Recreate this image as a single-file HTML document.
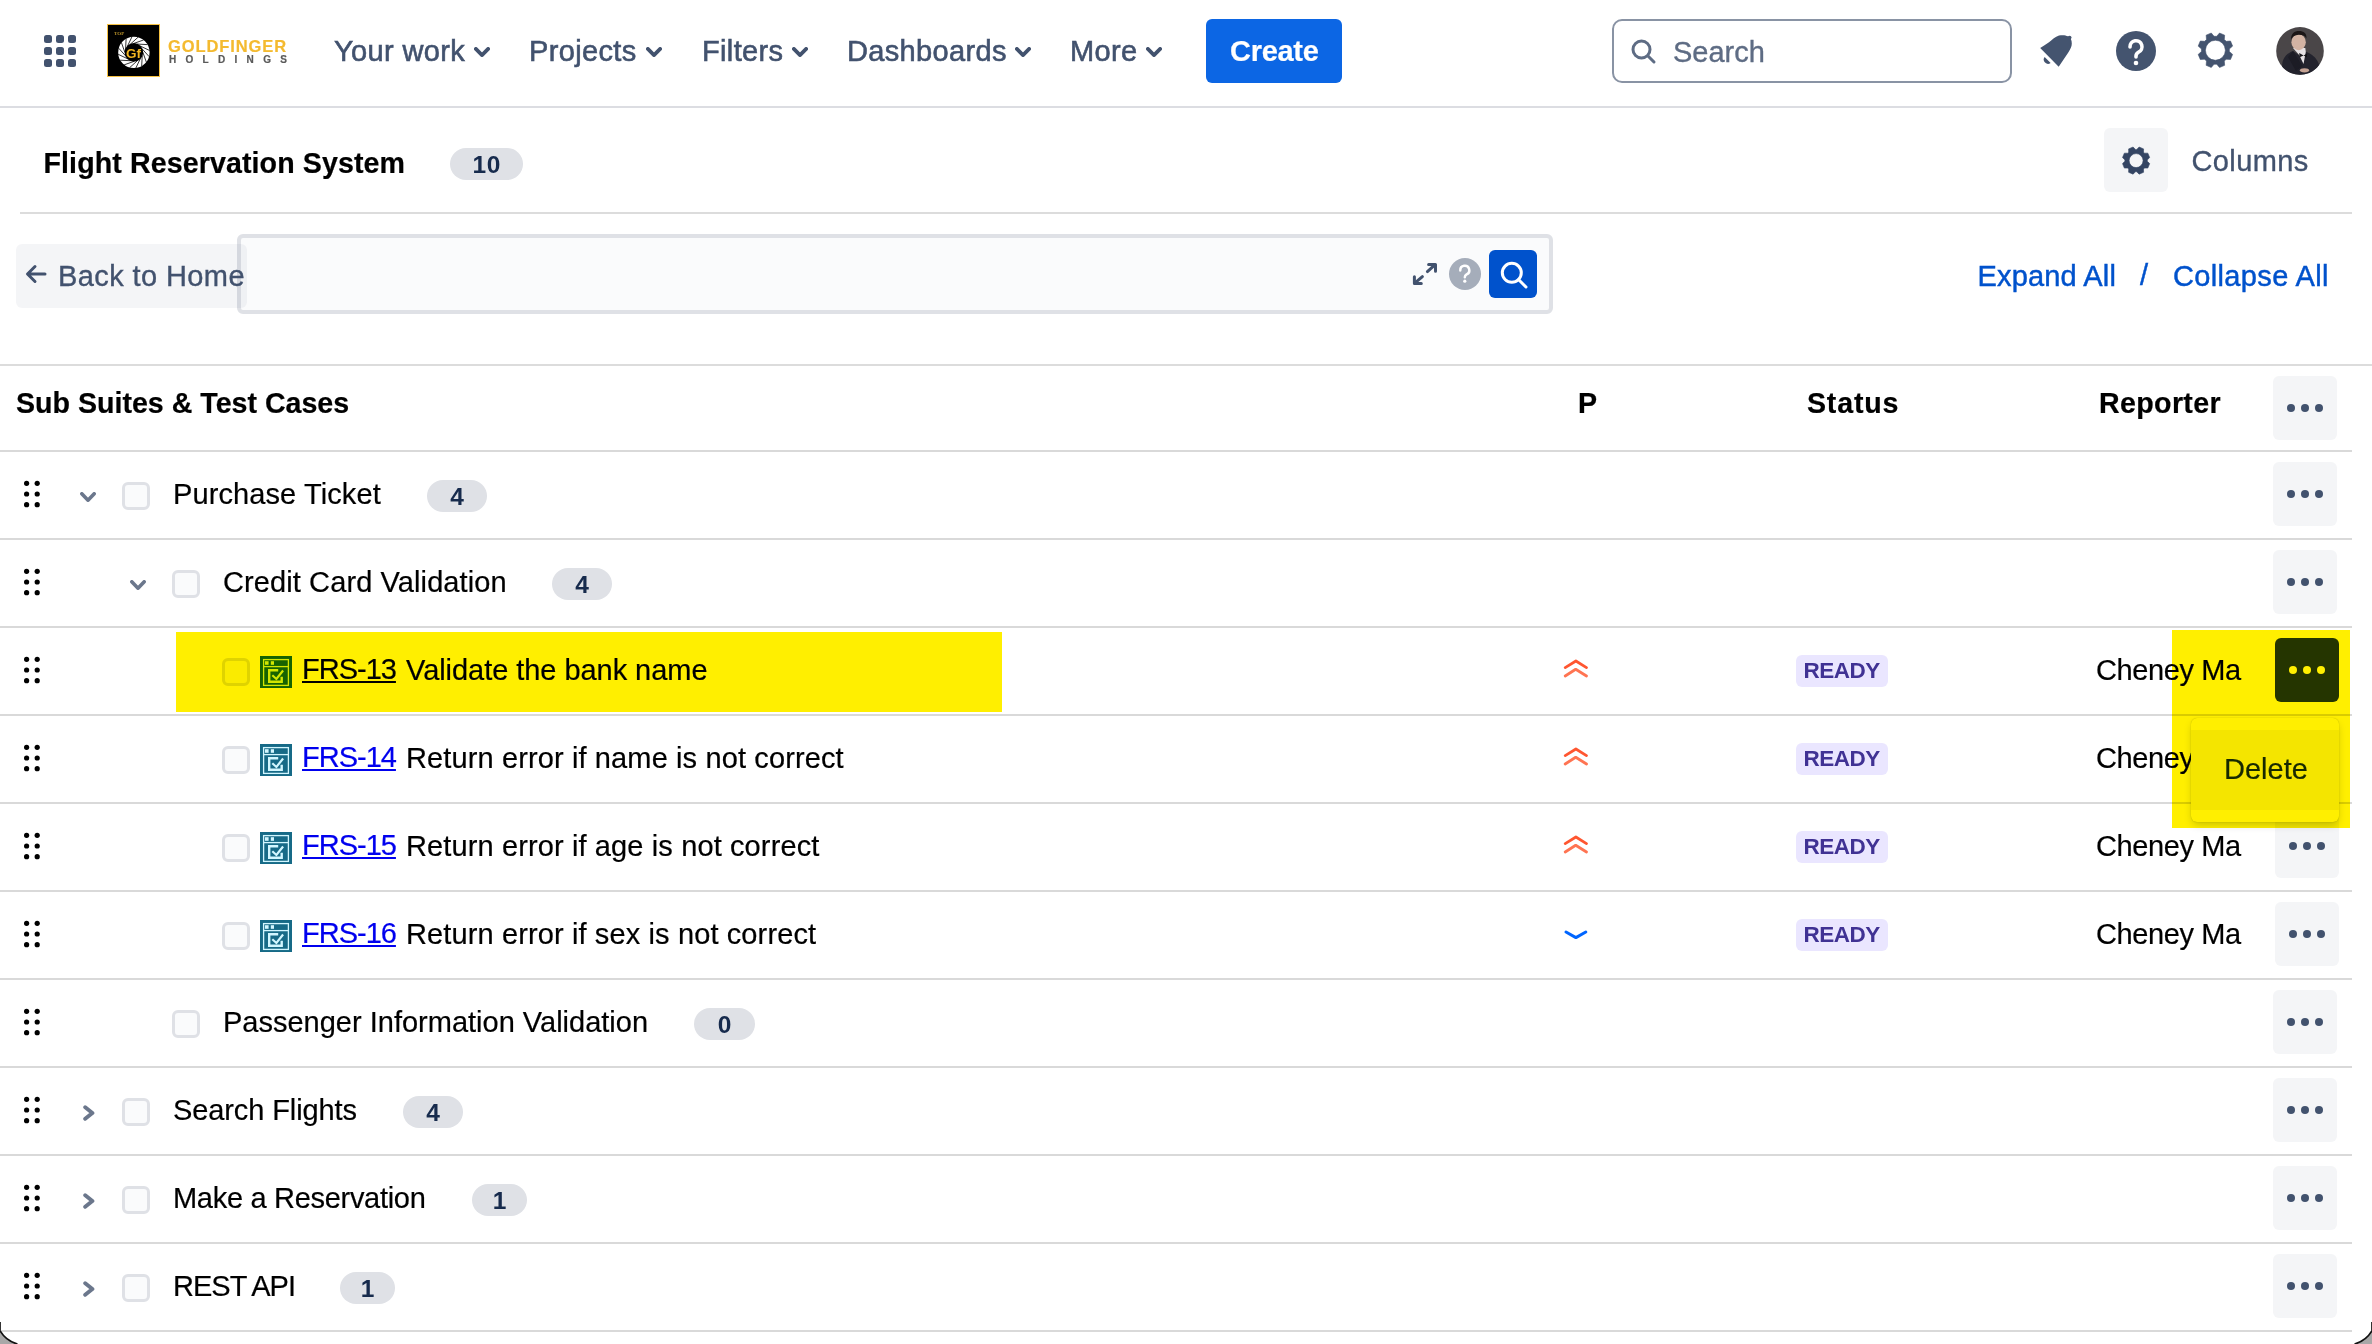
<!DOCTYPE html><html><head><meta charset="utf-8"><style>
*{box-sizing:border-box;margin:0;padding:0}
html,body{width:2372px;height:1344px;overflow:hidden;background:#fff;font-family:'Liberation Sans', sans-serif}
.t{position:absolute;line-height:40px;white-space:nowrap;-webkit-text-stroke:0.2px currentColor}
.a{position:absolute}
.hl{position:absolute;background:#FFEF00;mix-blend-mode:multiply}
.line{position:absolute;height:2px;background:#D9D9D9}
.cb{position:absolute;width:28px;height:28px;border:3.5px solid #DFE1E6;border-radius:6px;background:#FAFBFC}
.badge{position:absolute;height:32px;border-radius:16px;background:#DFE1E6;color:#172B4D;font-weight:bold;font-size:24.5px;line-height:33px;text-align:center}
.more{position:absolute;width:64px;height:64px;border-radius:6px;background:#F4F5F7}
.more i{position:absolute;top:28px;width:8px;height:8px;border-radius:50%;background:#42526E}
.drag i{position:absolute;width:6px;height:6px;border-radius:50%;background:#000}
.lozenge{position:absolute;height:32px;width:92px;border-radius:6px;background:#EAE6FF;color:#403294;font-weight:bold;font-size:22.5px;letter-spacing:-0.5px;text-indent:-0.5px;line-height:32px;text-align:center}
</style></head><body>
<div class="a" style="left:44px;top:35px;width:8px;height:8px;border-radius:2.5px;background:#42526E"></div>
<div class="a" style="left:56px;top:35px;width:8px;height:8px;border-radius:2.5px;background:#42526E"></div>
<div class="a" style="left:68px;top:35px;width:8px;height:8px;border-radius:2.5px;background:#42526E"></div>
<div class="a" style="left:44px;top:47px;width:8px;height:8px;border-radius:2.5px;background:#42526E"></div>
<div class="a" style="left:56px;top:47px;width:8px;height:8px;border-radius:2.5px;background:#42526E"></div>
<div class="a" style="left:68px;top:47px;width:8px;height:8px;border-radius:2.5px;background:#42526E"></div>
<div class="a" style="left:44px;top:59px;width:8px;height:8px;border-radius:2.5px;background:#42526E"></div>
<div class="a" style="left:56px;top:59px;width:8px;height:8px;border-radius:2.5px;background:#42526E"></div>
<div class="a" style="left:68px;top:59px;width:8px;height:8px;border-radius:2.5px;background:#42526E"></div>
<div class="a" style="left:107px;top:24px;width:53px;height:53px;background:#000;border:1.5px solid #F6C244"></div>
<svg class="a" style="left:107px;top:24px" width="53" height="53" viewBox="0 0 53 53">
<circle cx="26.9" cy="28.4" r="12.5" fill="none" stroke="#fff" stroke-width="6.4"/>
<g stroke="#000" stroke-width="0.8"><line x1="35.90" y1="28.40" x2="39.35" y2="38.13"/><line x1="35.21" y1="31.84" x2="34.68" y2="42.15"/><line x1="33.26" y1="34.76" x2="28.83" y2="44.08"/><line x1="30.34" y1="36.71" x2="22.68" y2="43.63"/><line x1="26.90" y1="37.40" x2="17.17" y2="40.85"/><line x1="23.46" y1="36.71" x2="13.15" y2="36.18"/><line x1="20.54" y1="34.76" x2="11.22" y2="30.33"/><line x1="18.59" y1="31.84" x2="11.67" y2="24.18"/><line x1="17.90" y1="28.40" x2="14.45" y2="18.67"/><line x1="18.59" y1="24.96" x2="19.12" y2="14.65"/><line x1="20.54" y1="22.04" x2="24.97" y2="12.72"/><line x1="23.46" y1="20.09" x2="31.12" y2="13.17"/><line x1="26.90" y1="19.40" x2="36.63" y2="15.95"/><line x1="30.34" y1="20.09" x2="40.65" y2="20.62"/><line x1="33.26" y1="22.04" x2="42.58" y2="26.47"/><line x1="35.21" y1="24.96" x2="42.13" y2="32.62"/></g>
<text x="26.6" y="33.6" font-family="Liberation Sans" font-weight="bold" font-size="13.5" fill="#F2B520" text-anchor="middle">Gf</text>
<text x="7" y="11" font-family="Liberation Serif" font-weight="bold" font-size="5" fill="#B8912A">TOP</text>
</svg>
<div class="t " style="left:168px;top:25.78px;font-size:16.5px;color:#F4BA2F;font-weight:bold;letter-spacing:0.9px;">GOLDFINGER</div>
<div class="t " style="left:169px;top:40.03px;font-size:10px;color:#5A5A5A;font-weight:bold;letter-spacing:9.3px;">HOLDINGS</div>
<div class="t " style="left:334px;top:30.95px;font-size:29px;color:#42526E;font-weight:normal;letter-spacing:0.35px;-webkit-text-stroke:0.6px #42526E">Your work</div>
<svg class="a" style="left:474px;top:47px" width="16" height="10" viewBox="0 0 16 10"><path d="M1.85 1.85 L8.0 8.15 L14.15 1.85" fill="none" stroke="#42526E" stroke-width="3.7" stroke-linecap="round" stroke-linejoin="round"/></svg>
<div class="t " style="left:529px;top:30.95px;font-size:29px;color:#42526E;font-weight:normal;letter-spacing:0.35px;-webkit-text-stroke:0.6px #42526E">Projects</div>
<svg class="a" style="left:646px;top:47px" width="16" height="10" viewBox="0 0 16 10"><path d="M1.85 1.85 L8.0 8.15 L14.15 1.85" fill="none" stroke="#42526E" stroke-width="3.7" stroke-linecap="round" stroke-linejoin="round"/></svg>
<div class="t " style="left:702px;top:30.95px;font-size:29px;color:#42526E;font-weight:normal;letter-spacing:0.35px;-webkit-text-stroke:0.6px #42526E">Filters</div>
<svg class="a" style="left:792px;top:47px" width="16" height="10" viewBox="0 0 16 10"><path d="M1.85 1.85 L8.0 8.15 L14.15 1.85" fill="none" stroke="#42526E" stroke-width="3.7" stroke-linecap="round" stroke-linejoin="round"/></svg>
<div class="t " style="left:847px;top:30.95px;font-size:29px;color:#42526E;font-weight:normal;letter-spacing:0.35px;-webkit-text-stroke:0.6px #42526E">Dashboards</div>
<svg class="a" style="left:1015px;top:47px" width="16" height="10" viewBox="0 0 16 10"><path d="M1.85 1.85 L8.0 8.15 L14.15 1.85" fill="none" stroke="#42526E" stroke-width="3.7" stroke-linecap="round" stroke-linejoin="round"/></svg>
<div class="t " style="left:1070px;top:30.95px;font-size:29px;color:#42526E;font-weight:normal;letter-spacing:0.35px;-webkit-text-stroke:0.6px #42526E">More</div>
<svg class="a" style="left:1146px;top:47px" width="16" height="10" viewBox="0 0 16 10"><path d="M1.85 1.85 L8.0 8.15 L14.15 1.85" fill="none" stroke="#42526E" stroke-width="3.7" stroke-linecap="round" stroke-linejoin="round"/></svg>
<div class="a" style="left:1206px;top:19px;width:136px;height:64px;border-radius:6px;background:#0C66E4"></div>
<div class="t " style="left:1230px;top:31.35px;font-size:29px;color:#fff;font-weight:bold;letter-spacing:-0.3px;">Create</div>
<div class="a" style="left:1612px;top:19px;width:400px;height:64px;border-radius:10px;border:2px solid #8993A4;background:#fff"></div>
<svg class="a" style="left:1630px;top:38px" width="28" height="28" viewBox="0 0 28 28"><circle cx="11.5" cy="11.5" r="8.5" fill="none" stroke="#5E6C84" stroke-width="3"/><line x1="18" y1="18" x2="24" y2="24" stroke="#5E6C84" stroke-width="3" stroke-linecap="round"/></svg>
<div class="t " style="left:1673px;top:31.95px;font-size:29px;color:#5E6C84;font-weight:normal;letter-spacing:0px;-webkit-text-stroke:0.35px #5E6C84">Search</div>
<svg class="a" style="left:2032px;top:28px" width="50" height="46" viewBox="0 0 50 46">
<path d="M8.2 20 L26.7 38.7 L36.3 24.6 C38.5 21 39.8 18.5 39.8 15.5 C39.8 12 38.5 9.5 36 8.3 C33.5 7 30 6.8 27 7.6 C23 8.8 20.5 11.6 17 14.3 C14 16.5 11 18.5 8.2 20 Z" fill="#44546F"/>
<circle cx="37.6" cy="9.6" r="1.9" fill="#44546F"/>
<path d="M12.6 29 L18.6 35 A4.3 4.3 0 0 1 12.6 29 Z" fill="#44546F"/></svg>
<svg class="a" style="left:2116px;top:31px" width="40" height="40" viewBox="0 0 40 40"><circle cx="20" cy="20" r="20" fill="#44546F"/>
<path d="M14 16 a6 6 0 1 1 8.5 5.2 C20.8 22.2 20 23 20 25 L20 26" fill="none" stroke="#fff" stroke-width="3.6" stroke-linecap="round"/><circle cx="20" cy="32" r="2.3" fill="#fff"/></svg>
<svg class="a" style="left:0;top:0" width="2372" height="220" viewBox="0 0 2372 220"><path d="M2229.34 51.59 L2232.61 54.38 L2230.49 59.50 L2226.20 59.16 L2224.31 61.05 L2224.65 65.34 L2219.53 67.46 L2216.74 64.19 L2214.06 64.19 L2211.27 67.46 L2206.15 65.34 L2206.49 61.05 L2204.60 59.16 L2200.31 59.50 L2198.19 54.38 L2201.46 51.59 L2201.46 48.91 L2198.19 46.12 L2200.31 41.00 L2204.60 41.34 L2206.49 39.45 L2206.15 35.16 L2211.27 33.04 L2214.06 36.31 L2216.74 36.31 L2219.53 33.04 L2224.65 35.16 L2224.31 39.45 L2226.20 41.34 L2230.49 41.00 L2232.61 46.12 L2229.34 48.91 Z M2225.40 50.25 A10.0 10.0 0 1 0 2205.40 50.25 A10.0 10.0 0 1 0 2225.40 50.25 Z" fill="#44546F" fill-rule="evenodd" stroke="#44546F" stroke-width="0.6" stroke-linejoin="round"/></svg>
<svg class="a" style="left:2276px;top:27px" width="48" height="48" viewBox="0 0 48 48">
<defs><clipPath id="av"><circle cx="24" cy="23.9" r="23.8"/></clipPath></defs>
<g clip-path="url(#av)"><rect width="48" height="48" fill="#4A4648"/>
<path d="M5 48 L6.5 35 C8 29 12 26 17 24 L23 28 L29.5 24.5 C34 26 38.5 29 41.5 34 L45 42 L41 48 Z" fill="#23232D"/>
<path d="M17 21 L23.2 28 L27.5 37 L29.8 25 L29.3 21 Z" fill="#E6E2E4"/>
<path d="M23.2 26 L27.6 28.4 L23.6 30.2 Z M27.6 28.4 L31.2 26.6 L30.8 30.2 Z" fill="#121216"/>
<path d="M17 24 L26.5 39 L20 44 L12 30 Z" fill="#1C1C25"/>
<ellipse cx="22.6" cy="15.2" rx="7.2" ry="8" fill="#D3B3A3"/>
<path d="M15 12.5 C14.8 6.5 18.5 4 23 4 C27.5 4 31 6 30.4 11.5 C29.2 8.5 25.5 7.6 22.5 7.8 C19 8 16.5 9.5 15 12.5 Z" fill="#1B1616"/>
<ellipse cx="28.5" cy="43.3" rx="4.6" ry="2.1" fill="#C4A293"/>
</g></svg>
<div class="a" style="left:0;top:106px;width:2372px;height:2px;background:#DCDDE2"></div>
<div class="t " style="left:43.5px;top:142.59px;font-size:28.6px;color:#000;font-weight:bold;letter-spacing:0.1px;">Flight Reservation System</div>
<div class="badge" style="left:450px;top:148px;width:73px;letter-spacing:0.5px;text-indent:0.5px">10</div>
<div class="a" style="left:2104px;top:128px;width:64px;height:64px;border-radius:6px;background:#F4F5F7"></div>
<svg class="a" style="left:0;top:0" width="2372" height="220" viewBox="0 0 2372 220"><path d="M2147.28 161.28 L2149.67 163.61 L2147.82 168.07 L2144.49 168.02 L2143.52 168.99 L2143.57 172.32 L2139.11 174.17 L2136.78 171.78 L2135.42 171.78 L2133.09 174.17 L2128.63 172.32 L2128.68 168.99 L2127.71 168.02 L2124.38 168.07 L2122.53 163.61 L2124.92 161.28 L2124.92 159.92 L2122.53 157.59 L2124.38 153.13 L2127.71 153.18 L2128.68 152.21 L2128.63 148.88 L2133.09 147.03 L2135.42 149.42 L2136.78 149.42 L2139.11 147.03 L2143.57 148.88 L2143.52 152.21 L2144.49 153.18 L2147.82 153.13 L2149.67 157.59 L2147.28 159.92 Z M2143.10 160.60 A7.0 7.0 0 1 0 2129.10 160.60 A7.0 7.0 0 1 0 2143.10 160.60 Z" fill="#344563" fill-rule="evenodd" stroke="#344563" stroke-width="0.6" stroke-linejoin="round"/></svg>
<div class="t " style="left:2191.5px;top:140.95px;font-size:29px;color:#42526E;font-weight:normal;letter-spacing:0.4px;-webkit-text-stroke:0.35px #42526E">Columns</div>
<div class="a" style="left:20px;top:212px;width:2332px;height:2px;background:#DCDCDC"></div>
<div class="a" style="left:237px;top:234px;width:1316px;height:80px;border-radius:6px;border:4px solid #DFE1E6;background:#FAFBFC"></div>
<div class="a" style="left:16px;top:244px;width:231px;height:64px;border-radius:6px;background:rgba(9,30,66,0.045)"></div>
<svg class="a" style="left:25px;top:264px" width="22" height="20" viewBox="0 0 22 20"><path d="M20 10 L3 10 M10 2.5 L2.5 10 L10 17.5" fill="none" stroke="#42526E" stroke-width="3" stroke-linecap="round" stroke-linejoin="round"/></svg>
<div class="t " style="left:58px;top:255.95px;font-size:29px;color:#42526E;font-weight:normal;letter-spacing:0.4px;-webkit-text-stroke:0.35px #42526E">Back to Home</div>
<svg class="a" style="left:1410px;top:260px" width="30" height="28" viewBox="0 0 30 28">
<g fill="none" stroke="#42526E" stroke-width="3" stroke-linecap="round" stroke-linejoin="round">
<polyline points="18.6 4.4 25.5 4.4 25.5 11.2"/><line x1="17.4" y1="11.6" x2="24" y2="5.6"/>
<polyline points="4.4 16.8 4.4 23.6 11.3 23.6"/><line x1="5.6" y1="22.4" x2="12.4" y2="16.6"/>
</g></svg>
<svg class="a" style="left:1449px;top:258px" width="32" height="32" viewBox="0 0 32 32"><circle cx="16" cy="16" r="16" fill="#A5ADBA"/>
<path d="M11.3 12.4 A4.5 4.5 0 1 1 17.6 16.4 C16.4 17.1 15.8 17.8 15.8 19.2" fill="none" stroke="#fff" stroke-width="2.5" stroke-linecap="round"/><circle cx="15.8" cy="23.2" r="1.6" fill="#fff"/></svg>
<div class="a" style="left:1489px;top:250px;width:48px;height:48px;border-radius:6px;background:#0052CC"></div>
<svg class="a" style="left:1489px;top:250px" width="48" height="48" viewBox="0 0 48 48"><circle cx="22.8" cy="22.8" r="9.5" fill="none" stroke="#fff" stroke-width="3"/><line x1="29.5" y1="29.5" x2="37" y2="37" stroke="#fff" stroke-width="3" stroke-linecap="round"/></svg>
<div class="t " style="left:1977.5px;top:255.95px;font-size:29px;color:#0052CC;font-weight:normal;letter-spacing:0.15px;-webkit-text-stroke:0.45px #0052CC">Expand All</div>
<div class="t " style="left:2140px;top:254.95px;font-size:29px;color:#0052CC;font-weight:normal;letter-spacing:0px;-webkit-text-stroke:0.45px #0052CC">/</div>
<div class="t " style="left:2173px;top:255.95px;font-size:29px;color:#0052CC;font-weight:normal;letter-spacing:0.35px;-webkit-text-stroke:0.45px #0052CC">Collapse All</div>
<div class="a" style="left:0;top:364px;width:2372px;height:2px;background:#DCDCDC"></div>
<div class="t " style="left:16px;top:383.09px;font-size:28.6px;color:#000;font-weight:bold;letter-spacing:0px;">Sub Suites &amp; Test Cases</div>
<div class="t " style="left:1578px;top:383.09px;font-size:28.6px;color:#000;font-weight:bold;letter-spacing:0px;">P</div>
<div class="t " style="left:1807px;top:383.09px;font-size:28.6px;color:#000;font-weight:bold;letter-spacing:0.8px;">Status</div>
<div class="t " style="left:2099px;top:383.09px;font-size:28.6px;color:#000;font-weight:bold;letter-spacing:0.35px;">Reporter</div>
<div class="more" style="left:2273px;top:376px;background:#F4F5F7"><i style="left:14px;background:#42526E"></i><i style="left:28px;background:#42526E"></i><i style="left:42px;background:#42526E"></i></div>
<div class="line" style="left:0;top:450px;width:2352px"></div>
<svg class="a" style="left:20px;top:478px" width="24" height="32" viewBox="0 0 24 32"><circle cx="6.6" cy="5.30" r="2.6" fill="#000"/><circle cx="17.2" cy="5.30" r="2.6" fill="#000"/><circle cx="6.6" cy="16.00" r="2.6" fill="#000"/><circle cx="17.2" cy="16.00" r="2.6" fill="#000"/><circle cx="6.6" cy="26.70" r="2.6" fill="#000"/><circle cx="17.2" cy="26.70" r="2.6" fill="#000"/></svg>
<svg class="a" style="left:80px;top:491.8px" width="16" height="10" viewBox="0 0 16 10"><path d="M1.8 1.8 L8.0 8.2 L14.2 1.8" fill="none" stroke="#6B778C" stroke-width="3.6" stroke-linecap="round" stroke-linejoin="round"/></svg>
<div class="cb" style="left:122px;top:482px"></div>
<div class="t " style="left:173px;top:473.95px;font-size:29px;color:#000;font-weight:normal;letter-spacing:0.1px;">Purchase Ticket</div>
<div class="badge" style="left:427px;top:480px;width:60px">4</div>
<div class="more" style="left:2273px;top:462px;background:#F4F5F7"><i style="left:14px;background:#42526E"></i><i style="left:28px;background:#42526E"></i><i style="left:42px;background:#42526E"></i></div>
<div class="line" style="left:0;top:538px;width:2352px"></div>
<svg class="a" style="left:20px;top:566px" width="24" height="32" viewBox="0 0 24 32"><circle cx="6.6" cy="5.30" r="2.6" fill="#000"/><circle cx="17.2" cy="5.30" r="2.6" fill="#000"/><circle cx="6.6" cy="16.00" r="2.6" fill="#000"/><circle cx="17.2" cy="16.00" r="2.6" fill="#000"/><circle cx="6.6" cy="26.70" r="2.6" fill="#000"/><circle cx="17.2" cy="26.70" r="2.6" fill="#000"/></svg>
<svg class="a" style="left:130px;top:579.8px" width="16" height="10" viewBox="0 0 16 10"><path d="M1.8 1.8 L8.0 8.2 L14.2 1.8" fill="none" stroke="#6B778C" stroke-width="3.6" stroke-linecap="round" stroke-linejoin="round"/></svg>
<div class="cb" style="left:172px;top:570px"></div>
<div class="t " style="left:223px;top:561.95px;font-size:29px;color:#000;font-weight:normal;letter-spacing:0.1px;">Credit Card Validation</div>
<div class="badge" style="left:552px;top:568px;width:60px">4</div>
<div class="more" style="left:2273px;top:550px;background:#F4F5F7"><i style="left:14px;background:#42526E"></i><i style="left:28px;background:#42526E"></i><i style="left:42px;background:#42526E"></i></div>
<div class="line" style="left:0;top:626px;width:2352px"></div>
<svg class="a" style="left:20px;top:654px" width="24" height="32" viewBox="0 0 24 32"><circle cx="6.6" cy="5.30" r="2.6" fill="#000"/><circle cx="17.2" cy="5.30" r="2.6" fill="#000"/><circle cx="6.6" cy="16.00" r="2.6" fill="#000"/><circle cx="17.2" cy="16.00" r="2.6" fill="#000"/><circle cx="6.6" cy="26.70" r="2.6" fill="#000"/><circle cx="17.2" cy="26.70" r="2.6" fill="#000"/></svg>
<div class="cb" style="left:222px;top:658px"></div>
<svg class="a" style="left:260px;top:656px" width="32" height="32" viewBox="0 0 32 32">
<rect width="32" height="32" fill="#166A87"/>
<rect x="3.6" y="3.6" width="24.8" height="25.8" fill="none" stroke="#D2F6FF" stroke-width="1.3"/>
<line x1="3" y1="10.6" x2="29" y2="10.6" stroke="#D2F6FF" stroke-width="1.3"/>
<rect x="5" y="5.2" width="3.6" height="3.6" fill="#D2F6FF"/><rect x="10.8" y="5.2" width="3.2" height="3.6" fill="#D2F6FF"/>
<path d="M18.2 14.3 L9.2 14.3 L9.2 25.8 L21.7 25.8 L21.7 20.8" fill="none" stroke="#D2F6FF" stroke-width="2.4"/>
<path d="M12.3 19.3 L16.4 23 L23.1 14.5" fill="none" stroke="#D2F6FF" stroke-width="2.2"/>
</svg>
<div class="t " style="left:302px;top:648.95px;font-size:29px;color:#0000EE;font-weight:normal;letter-spacing:-1.0px;text-decoration:underline;text-underline-offset:2px;text-decoration-thickness:2px">FRS-13</div>
<div class="t " style="left:406px;top:649.95px;font-size:29px;color:#000;font-weight:normal;letter-spacing:-0.05px;">Validate the bank name</div>
<svg class="a" style="left:1560px;top:655px" width="32" height="32" viewBox="0 0 32 32">
<path d="M5.2 12.6 L15.9 6 L26.5 12.6" fill="none" stroke="#FF5630" stroke-width="2.8" stroke-linecap="round" stroke-linejoin="round"/>
<path d="M5.2 21 L15.7 14.3 L26.5 21" fill="none" stroke="#FF7452" stroke-width="2.8" stroke-linecap="round" stroke-linejoin="round"/></svg>
<div class="lozenge" style="left:1796px;top:655px">READY</div>
<div class="t " style="left:2096px;top:649.95px;font-size:29px;color:#000;font-weight:normal;letter-spacing:-0.4px;">Cheney Ma</div>
<div class="more" style="left:2275px;top:638px;background:#253858"><i style="left:14px;background:#fff"></i><i style="left:28px;background:#fff"></i><i style="left:42px;background:#fff"></i></div>
<div class="line" style="left:0;top:714px;width:2352px"></div>
<svg class="a" style="left:20px;top:742px" width="24" height="32" viewBox="0 0 24 32"><circle cx="6.6" cy="5.30" r="2.6" fill="#000"/><circle cx="17.2" cy="5.30" r="2.6" fill="#000"/><circle cx="6.6" cy="16.00" r="2.6" fill="#000"/><circle cx="17.2" cy="16.00" r="2.6" fill="#000"/><circle cx="6.6" cy="26.70" r="2.6" fill="#000"/><circle cx="17.2" cy="26.70" r="2.6" fill="#000"/></svg>
<div class="cb" style="left:222px;top:746px"></div>
<svg class="a" style="left:260px;top:744px" width="32" height="32" viewBox="0 0 32 32">
<rect width="32" height="32" fill="#166A87"/>
<rect x="3.6" y="3.6" width="24.8" height="25.8" fill="none" stroke="#D2F6FF" stroke-width="1.3"/>
<line x1="3" y1="10.6" x2="29" y2="10.6" stroke="#D2F6FF" stroke-width="1.3"/>
<rect x="5" y="5.2" width="3.6" height="3.6" fill="#D2F6FF"/><rect x="10.8" y="5.2" width="3.2" height="3.6" fill="#D2F6FF"/>
<path d="M18.2 14.3 L9.2 14.3 L9.2 25.8 L21.7 25.8 L21.7 20.8" fill="none" stroke="#D2F6FF" stroke-width="2.4"/>
<path d="M12.3 19.3 L16.4 23 L23.1 14.5" fill="none" stroke="#D2F6FF" stroke-width="2.2"/>
</svg>
<div class="t " style="left:302px;top:736.95px;font-size:29px;color:#0000EE;font-weight:normal;letter-spacing:-1.0px;text-decoration:underline;text-underline-offset:2px;text-decoration-thickness:2px">FRS-14</div>
<div class="t " style="left:406px;top:737.95px;font-size:29px;color:#000;font-weight:normal;letter-spacing:0.12px;">Return error if name is not correct</div>
<svg class="a" style="left:1560px;top:743px" width="32" height="32" viewBox="0 0 32 32">
<path d="M5.2 12.6 L15.9 6 L26.5 12.6" fill="none" stroke="#FF5630" stroke-width="2.8" stroke-linecap="round" stroke-linejoin="round"/>
<path d="M5.2 21 L15.7 14.3 L26.5 21" fill="none" stroke="#FF7452" stroke-width="2.8" stroke-linecap="round" stroke-linejoin="round"/></svg>
<div class="lozenge" style="left:1796px;top:743px">READY</div>
<div class="t " style="left:2096px;top:737.95px;font-size:29px;color:#000;font-weight:normal;letter-spacing:-0.4px;">Cheney Ma</div>
<div class="more" style="left:2275px;top:726px;background:#F4F5F7"><i style="left:14px;background:#42526E"></i><i style="left:28px;background:#42526E"></i><i style="left:42px;background:#42526E"></i></div>
<div class="line" style="left:0;top:802px;width:2352px"></div>
<svg class="a" style="left:20px;top:830px" width="24" height="32" viewBox="0 0 24 32"><circle cx="6.6" cy="5.30" r="2.6" fill="#000"/><circle cx="17.2" cy="5.30" r="2.6" fill="#000"/><circle cx="6.6" cy="16.00" r="2.6" fill="#000"/><circle cx="17.2" cy="16.00" r="2.6" fill="#000"/><circle cx="6.6" cy="26.70" r="2.6" fill="#000"/><circle cx="17.2" cy="26.70" r="2.6" fill="#000"/></svg>
<div class="cb" style="left:222px;top:834px"></div>
<svg class="a" style="left:260px;top:832px" width="32" height="32" viewBox="0 0 32 32">
<rect width="32" height="32" fill="#166A87"/>
<rect x="3.6" y="3.6" width="24.8" height="25.8" fill="none" stroke="#D2F6FF" stroke-width="1.3"/>
<line x1="3" y1="10.6" x2="29" y2="10.6" stroke="#D2F6FF" stroke-width="1.3"/>
<rect x="5" y="5.2" width="3.6" height="3.6" fill="#D2F6FF"/><rect x="10.8" y="5.2" width="3.2" height="3.6" fill="#D2F6FF"/>
<path d="M18.2 14.3 L9.2 14.3 L9.2 25.8 L21.7 25.8 L21.7 20.8" fill="none" stroke="#D2F6FF" stroke-width="2.4"/>
<path d="M12.3 19.3 L16.4 23 L23.1 14.5" fill="none" stroke="#D2F6FF" stroke-width="2.2"/>
</svg>
<div class="t " style="left:302px;top:824.95px;font-size:29px;color:#0000EE;font-weight:normal;letter-spacing:-1.0px;text-decoration:underline;text-underline-offset:2px;text-decoration-thickness:2px">FRS-15</div>
<div class="t " style="left:406px;top:825.95px;font-size:29px;color:#000;font-weight:normal;letter-spacing:0.12px;">Return error if age is not correct</div>
<svg class="a" style="left:1560px;top:831px" width="32" height="32" viewBox="0 0 32 32">
<path d="M5.2 12.6 L15.9 6 L26.5 12.6" fill="none" stroke="#FF5630" stroke-width="2.8" stroke-linecap="round" stroke-linejoin="round"/>
<path d="M5.2 21 L15.7 14.3 L26.5 21" fill="none" stroke="#FF7452" stroke-width="2.8" stroke-linecap="round" stroke-linejoin="round"/></svg>
<div class="lozenge" style="left:1796px;top:831px">READY</div>
<div class="t " style="left:2096px;top:825.95px;font-size:29px;color:#000;font-weight:normal;letter-spacing:-0.4px;">Cheney Ma</div>
<div class="more" style="left:2275px;top:814px;background:#F4F5F7"><i style="left:14px;background:#42526E"></i><i style="left:28px;background:#42526E"></i><i style="left:42px;background:#42526E"></i></div>
<div class="line" style="left:0;top:890px;width:2352px"></div>
<svg class="a" style="left:20px;top:918px" width="24" height="32" viewBox="0 0 24 32"><circle cx="6.6" cy="5.30" r="2.6" fill="#000"/><circle cx="17.2" cy="5.30" r="2.6" fill="#000"/><circle cx="6.6" cy="16.00" r="2.6" fill="#000"/><circle cx="17.2" cy="16.00" r="2.6" fill="#000"/><circle cx="6.6" cy="26.70" r="2.6" fill="#000"/><circle cx="17.2" cy="26.70" r="2.6" fill="#000"/></svg>
<div class="cb" style="left:222px;top:922px"></div>
<svg class="a" style="left:260px;top:920px" width="32" height="32" viewBox="0 0 32 32">
<rect width="32" height="32" fill="#166A87"/>
<rect x="3.6" y="3.6" width="24.8" height="25.8" fill="none" stroke="#D2F6FF" stroke-width="1.3"/>
<line x1="3" y1="10.6" x2="29" y2="10.6" stroke="#D2F6FF" stroke-width="1.3"/>
<rect x="5" y="5.2" width="3.6" height="3.6" fill="#D2F6FF"/><rect x="10.8" y="5.2" width="3.2" height="3.6" fill="#D2F6FF"/>
<path d="M18.2 14.3 L9.2 14.3 L9.2 25.8 L21.7 25.8 L21.7 20.8" fill="none" stroke="#D2F6FF" stroke-width="2.4"/>
<path d="M12.3 19.3 L16.4 23 L23.1 14.5" fill="none" stroke="#D2F6FF" stroke-width="2.2"/>
</svg>
<div class="t " style="left:302px;top:912.95px;font-size:29px;color:#0000EE;font-weight:normal;letter-spacing:-1.0px;text-decoration:underline;text-underline-offset:2px;text-decoration-thickness:2px">FRS-16</div>
<div class="t " style="left:406px;top:913.95px;font-size:29px;color:#000;font-weight:normal;letter-spacing:0.12px;">Return error if sex is not correct</div>
<svg class="a" style="left:1560px;top:920px" width="32" height="32" viewBox="0 0 32 32">
<path d="M6 12 L15.9 17.6 L25.8 12" fill="none" stroke="#0065FF" stroke-width="3" stroke-linecap="round" stroke-linejoin="round"/></svg>
<div class="lozenge" style="left:1796px;top:919px">READY</div>
<div class="t " style="left:2096px;top:913.95px;font-size:29px;color:#000;font-weight:normal;letter-spacing:-0.4px;">Cheney Ma</div>
<div class="more" style="left:2275px;top:902px;background:#F4F5F7"><i style="left:14px;background:#42526E"></i><i style="left:28px;background:#42526E"></i><i style="left:42px;background:#42526E"></i></div>
<div class="line" style="left:0;top:978px;width:2352px"></div>
<svg class="a" style="left:20px;top:1006px" width="24" height="32" viewBox="0 0 24 32"><circle cx="6.6" cy="5.30" r="2.6" fill="#000"/><circle cx="17.2" cy="5.30" r="2.6" fill="#000"/><circle cx="6.6" cy="16.00" r="2.6" fill="#000"/><circle cx="17.2" cy="16.00" r="2.6" fill="#000"/><circle cx="6.6" cy="26.70" r="2.6" fill="#000"/><circle cx="17.2" cy="26.70" r="2.6" fill="#000"/></svg>
<div class="cb" style="left:172px;top:1010px"></div>
<div class="t " style="left:223px;top:1001.95px;font-size:29px;color:#000;font-weight:normal;letter-spacing:0px;">Passenger Information Validation</div>
<div class="badge" style="left:694px;top:1008px;width:61px">0</div>
<div class="more" style="left:2273px;top:990px;background:#F4F5F7"><i style="left:14px;background:#42526E"></i><i style="left:28px;background:#42526E"></i><i style="left:42px;background:#42526E"></i></div>
<div class="line" style="left:0;top:1066px;width:2352px"></div>
<svg class="a" style="left:20px;top:1094px" width="24" height="32" viewBox="0 0 24 32"><circle cx="6.6" cy="5.30" r="2.6" fill="#000"/><circle cx="17.2" cy="5.30" r="2.6" fill="#000"/><circle cx="6.6" cy="16.00" r="2.6" fill="#000"/><circle cx="17.2" cy="16.00" r="2.6" fill="#000"/><circle cx="6.6" cy="26.70" r="2.6" fill="#000"/><circle cx="17.2" cy="26.70" r="2.6" fill="#000"/></svg>
<svg class="a" style="left:83px;top:1104.5px" width="12" height="16" viewBox="0 0 12 16"><path d="M2.2 2.2 L9.4 8 L2.2 13.8" fill="none" stroke="#6B778C" stroke-width="3.9" stroke-linecap="round" stroke-linejoin="round"/></svg>
<div class="cb" style="left:122px;top:1098px"></div>
<div class="t " style="left:173px;top:1089.95px;font-size:29px;color:#000;font-weight:normal;letter-spacing:-0.1px;">Search Flights</div>
<div class="badge" style="left:403px;top:1096px;width:60px">4</div>
<div class="more" style="left:2273px;top:1078px;background:#F4F5F7"><i style="left:14px;background:#42526E"></i><i style="left:28px;background:#42526E"></i><i style="left:42px;background:#42526E"></i></div>
<div class="line" style="left:0;top:1154px;width:2352px"></div>
<svg class="a" style="left:20px;top:1182px" width="24" height="32" viewBox="0 0 24 32"><circle cx="6.6" cy="5.30" r="2.6" fill="#000"/><circle cx="17.2" cy="5.30" r="2.6" fill="#000"/><circle cx="6.6" cy="16.00" r="2.6" fill="#000"/><circle cx="17.2" cy="16.00" r="2.6" fill="#000"/><circle cx="6.6" cy="26.70" r="2.6" fill="#000"/><circle cx="17.2" cy="26.70" r="2.6" fill="#000"/></svg>
<svg class="a" style="left:83px;top:1192.5px" width="12" height="16" viewBox="0 0 12 16"><path d="M2.2 2.2 L9.4 8 L2.2 13.8" fill="none" stroke="#6B778C" stroke-width="3.9" stroke-linecap="round" stroke-linejoin="round"/></svg>
<div class="cb" style="left:122px;top:1186px"></div>
<div class="t " style="left:173px;top:1177.95px;font-size:29px;color:#000;font-weight:normal;letter-spacing:-0.3px;">Make a Reservation</div>
<div class="badge" style="left:472px;top:1184px;width:55px">1</div>
<div class="more" style="left:2273px;top:1166px;background:#F4F5F7"><i style="left:14px;background:#42526E"></i><i style="left:28px;background:#42526E"></i><i style="left:42px;background:#42526E"></i></div>
<div class="line" style="left:0;top:1242px;width:2352px"></div>
<svg class="a" style="left:20px;top:1270px" width="24" height="32" viewBox="0 0 24 32"><circle cx="6.6" cy="5.30" r="2.6" fill="#000"/><circle cx="17.2" cy="5.30" r="2.6" fill="#000"/><circle cx="6.6" cy="16.00" r="2.6" fill="#000"/><circle cx="17.2" cy="16.00" r="2.6" fill="#000"/><circle cx="6.6" cy="26.70" r="2.6" fill="#000"/><circle cx="17.2" cy="26.70" r="2.6" fill="#000"/></svg>
<svg class="a" style="left:83px;top:1280.5px" width="12" height="16" viewBox="0 0 12 16"><path d="M2.2 2.2 L9.4 8 L2.2 13.8" fill="none" stroke="#6B778C" stroke-width="3.9" stroke-linecap="round" stroke-linejoin="round"/></svg>
<div class="cb" style="left:122px;top:1274px"></div>
<div class="t " style="left:173px;top:1265.95px;font-size:29px;color:#000;font-weight:normal;letter-spacing:-1.0px;">REST API</div>
<div class="badge" style="left:340px;top:1272px;width:55px">1</div>
<div class="more" style="left:2273px;top:1254px;background:#F4F5F7"><i style="left:14px;background:#42526E"></i><i style="left:28px;background:#42526E"></i><i style="left:42px;background:#42526E"></i></div>
<div class="line" style="left:0;top:1330px;width:2352px"></div>
<div class="a" style="left:2191px;top:718px;width:148px;height:104px;border-radius:6px;background:#fff;box-shadow:0 4px 8px -2px rgba(9,30,66,0.25),0 0 1px rgba(9,30,66,0.31)"></div>
<div class="a" style="left:2191px;top:730px;width:148px;height:80px;background:#F4F5F7"></div>
<div class="t " style="left:2224px;top:748.95px;font-size:29px;color:#172B4D;font-weight:normal;letter-spacing:0px;">Delete</div>
<div class="hl" style="left:176px;top:632px;width:826px;height:80px"></div>
<div class="hl" style="left:2172px;top:630px;width:178px;height:198px"></div>
<svg class="a" style="left:0;top:0" width="2372" height="1344" viewBox="0 0 2372 1344">
<path d="M0 1330.7 A29 29 0 0 0 17.45 1344 L0 1344 Z" fill="#A8A8A8"/>
<path d="M2372 1330.7 A29 29 0 0 1 2354.55 1344 L2372 1344 Z" fill="#A8A8A8"/>
<path d="M0 1330.7 A29 29 0 0 0 17.45 1344" fill="none" stroke="#111" stroke-width="1.6"/>
<path d="M2372 1330.7 A29 29 0 0 1 2354.55 1344" fill="none" stroke="#111" stroke-width="1.6"/>
<line x1="0.5" y1="1322" x2="0.5" y2="1331" stroke="#333" stroke-width="1"/>
<line x1="2371.5" y1="1322" x2="2371.5" y2="1331" stroke="#333" stroke-width="1"/>
</svg>
</body></html>
